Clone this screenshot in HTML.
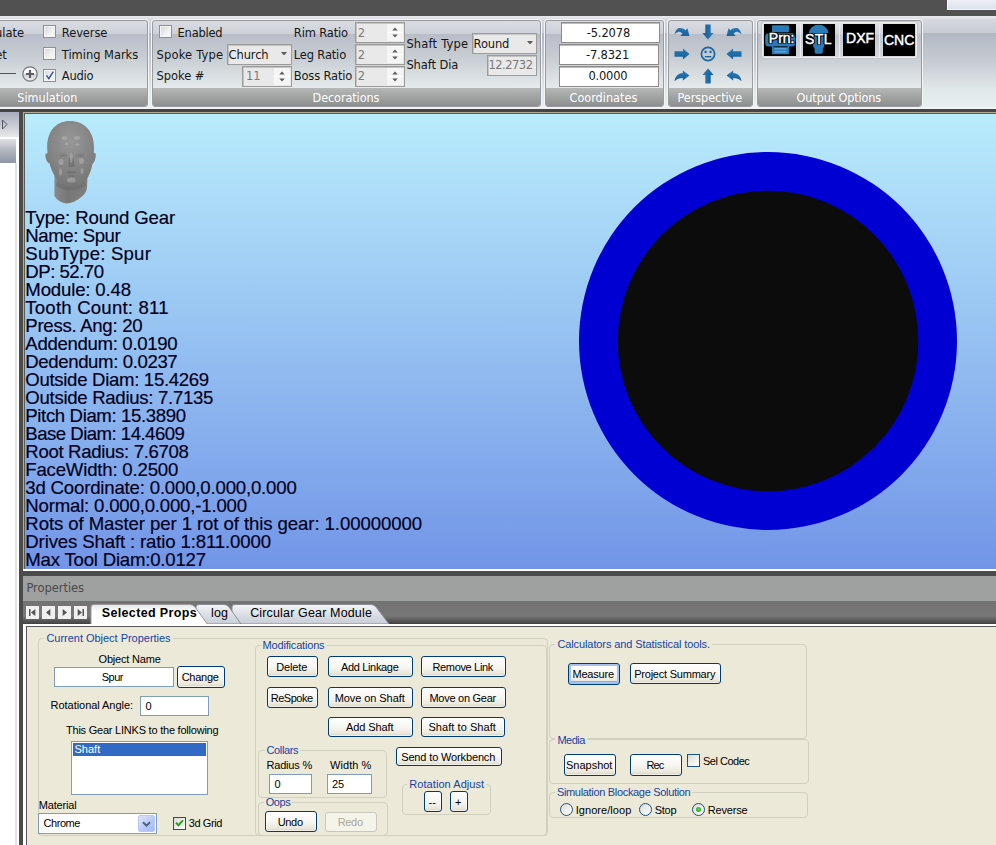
<!DOCTYPE html>
<html lang="en"><head><meta charset="utf-8"><title>Gear Designer</title>
<style>
html,body{margin:0;padding:0}
body{width:996px;height:845px;position:relative;overflow:hidden;background:#ece9d8;font-family:"Liberation Sans",sans-serif}
.a{position:absolute;box-sizing:border-box}
.t{position:absolute;white-space:pre;line-height:1}
.tah,.ari{font-family:"Liberation Sans",sans-serif}
.rib{font-family:"DejaVu Sans","Liberation Sans",sans-serif}
.ribc{font-family:"DejaVu Sans Condensed","DejaVu Sans",sans-serif}
#topbar{background:#515151}
#ribbon{background:linear-gradient(#e6e8ec 0,#e2e4e9 2px,#d6d9e0 3px,#c7cbd4 17px,#b2b8c3 17px,#c6cbd2 45px,#dfe6e8 72px,#e7f0f1 91px)}
.panel{border:1px solid #999b9e;border-radius:3px;box-shadow:0 0 0 1px #f4f5f6;background:linear-gradient(#dadce2 0,#cdd0d8 13px,#b8bdc8 13px,#cbd0d6 40px,#e6ecec 68px);overflow:hidden}
.plabel{left:0;right:0;bottom:0;height:18px;background:linear-gradient(#b6b8b8,#8d8f8f)}
.cb{border:1px solid #8e8f8f;background:linear-gradient(135deg,#d3d6dc,#f4f5f6 70%);box-shadow:inset 0 0 0 1px #f6f6f6}
.rin{border:1px solid #9b9b9b;background:#e9e9e9;box-shadow:inset 1px 1px 0 #c4c4c4}
.win{border:1px solid #8c8c8c;background:#fff;box-shadow:inset 0 1px 0 #bdbdbd}
.spin{background:#f5f5f5}
#view{background:linear-gradient(#b9ecfc,#7295e7)}
.gt{-webkit-text-stroke:.18px #00001a}
.btn{border:1px solid #003c74;border-radius:3px;background:linear-gradient(#ffffff 0,#f7f6f1 50%,#ebe8dc 85%,#d4d0c4 100%);box-shadow:inset 0 0 0 1px rgba(255,255,255,.6)}
.btn.def{box-shadow:inset 0 0 0 2px #a6c2f0,inset 0 -3px 0 #89ade4}
.btn.dis{border-color:#c9c7ba;background:#f5f4ea;box-shadow:none}
.gb{border:1px solid #d0d0bf;border-radius:4px}
.ol{text-shadow:1.3px 0 0 #000,-1.3px 0 0 #000,0 1.3px 0 #000,0 -1.3px 0 #000,1px 1px 0 #000,-1px -1px 0 #000,1px -1px 0 #000,-1px 1px 0 #000}
.ws{-webkit-text-stroke:.45px #fff}
.xin{border:1px solid #7f9db9;background:#fff}
</style></head>
<body>
<div id="topbar" class="a" style="left:0px;top:0px;width:996px;height:16px;"></div>
<div class="a" style="left:947px;top:0px;width:49px;height:10px;background:linear-gradient(#eef0f6,#dde1ec);border-left:1px solid #f8f8fa;border-bottom:1px solid #f8f8fa"></div>
<div id="ribbon" class="a" style="left:0px;top:16px;width:996px;height:91px;"></div>
<div class="a" style="left:0px;top:107px;width:996px;height:2px;background:#f4f4f4"></div>
<div class="a" style="left:0px;top:109px;width:996px;height:3px;background:#454545"></div>
<div class="a panel" style="left:-5px;top:20px;width:153px;height:87px;"><div class="a plabel"></div></div>
<span class="t rib" style="left:-5.02px;top:27.50px;font-size:11.5px;color:#161616;">ulate</span>
<span class="t rib" style="left:-4.89px;top:49.70px;font-size:11.5px;color:#161616;">et</span>
<div class="a" style="left:0px;top:73px;width:16px;height:1px;background:#555"></div>
<svg class="a" style="left:20.800px;top:64.800px" width="18" height="18" viewBox="0 0 18 18"><defs><linearGradient id="pg" x1="0" y1="0" x2="0" y2="1"><stop offset="0" stop-color="#fff"/><stop offset=".48" stop-color="#f2f3f4"/><stop offset=".52" stop-color="#cfd1d4"/><stop offset="1" stop-color="#eceeef"/></linearGradient></defs><circle cx="9" cy="9" r="7.200" fill="url(#pg)" stroke="#73767b" stroke-width="1.200"/><path d="M9 5v8M5 9h8" stroke="#5a5d66" stroke-width="2.100"/></svg>
<div class="a cb" style="left:43px;top:25px;width:13px;height:13px;"></div>
<span class="t rib" style="left:61.80px;top:27.50px;font-size:11.5px;color:#161616;letter-spacing:-0.105px;">Reverse</span>
<div class="a cb" style="left:43px;top:47px;width:13px;height:13px;"></div>
<span class="t rib" style="left:61.80px;top:49.70px;font-size:11.5px;color:#161616;letter-spacing:-0.038px;">Timing Marks</span>
<div class="a cb" style="left:43px;top:69px;width:13px;height:13px;"><svg class="a" style="left:1px;top:0" width="10" height="11" viewBox="0 0 10 11"><path d="M1.500 5.400 L3.800 8.600 L8.300 1.600" fill="none" stroke="#3d5c9e" stroke-width="1.600"/></svg></div>
<span class="t rib" style="left:61.80px;top:71.30px;font-size:11.5px;color:#161616;letter-spacing:-0.258px;">Audio</span>
<span class="t ribc" style="left:17.30px;top:92.00px;font-size:12.5px;color:#fff;letter-spacing:0.019px;">Simulation</span>
<div class="a panel" style="left:152px;top:20px;width:389px;height:87px;"><div class="a plabel"></div></div>
<div class="a cb" style="left:159px;top:25px;width:13px;height:13px;"></div>
<span class="t rib" style="left:177.60px;top:27.50px;font-size:11.5px;color:#161616;letter-spacing:-0.241px;">Enabled</span>
<span class="t rib" style="left:156.60px;top:49.70px;font-size:11.5px;color:#161616;letter-spacing:0.157px;">Spoke Type</span>
<div class="a rin" style="left:227px;top:43.5px;width:64.5px;height:21px;"></div><span class="t rib" style="left:228.60px;top:49.80px;font-size:11.5px;color:#161616;letter-spacing:-0.134px;">Church</span><svg class="a" style="left:281.3px;top:51.5px" width="6" height="3.500" viewBox="0 0 6 3.500"><path d="M0 0H6L3 3.500Z" fill="#5c5c5c"/></svg>
<span class="t rib" style="left:156.60px;top:71.30px;font-size:11.5px;color:#161616;letter-spacing:-0.067px;">Spoke #</span>
<div class="a rin" style="left:242px;top:65.5px;width:49.5px;height:21px;"></div><div class="a spin" style="left:273.5px;top:67.5px;width:16px;height:17px;"><svg class="a" style="left:5px;top:3px" width="6" height="11" viewBox="0 0 6 11"><path d="M0.300 3.500L3 0.500L5.700 3.500Z M0.300 7.500L3 10.500L5.700 7.500Z" fill="#5c5c5c"/></svg><div class="a" style="left:0;top:8px;width:16px;height:1px;background:#fff"></div></div>
<span class="t rib" style="left:246.00px;top:71.30px;font-size:11.5px;color:#7a7a7a;">11</span>
<span class="t rib" style="left:293.80px;top:27.50px;font-size:11.5px;color:#161616;letter-spacing:-0.153px;">Rim Ratio</span>
<span class="t rib" style="left:293.80px;top:49.70px;font-size:11.5px;color:#161616;letter-spacing:-0.174px;">Leg Ratio</span>
<span class="t rib" style="left:293.80px;top:71.30px;font-size:11.5px;color:#161616;letter-spacing:-0.179px;">Boss Ratio</span>
<div class="a rin" style="left:355px;top:21.5px;width:49.5px;height:21px;"></div><div class="a spin" style="left:386.5px;top:23.5px;width:16px;height:17px;"><svg class="a" style="left:5px;top:3px" width="6" height="11" viewBox="0 0 6 11"><path d="M0.300 3.500L3 0.500L5.700 3.500Z M0.300 7.500L3 10.500L5.700 7.500Z" fill="#5c5c5c"/></svg><div class="a" style="left:0;top:8px;width:16px;height:1px;background:#fff"></div></div>
<span class="t rib" style="left:357.80px;top:27.50px;font-size:11.5px;color:#7a7a7a;">2</span>
<div class="a rin" style="left:355px;top:43.5px;width:49.5px;height:21px;"></div><div class="a spin" style="left:386.5px;top:45.5px;width:16px;height:17px;"><svg class="a" style="left:5px;top:3px" width="6" height="11" viewBox="0 0 6 11"><path d="M0.300 3.500L3 0.500L5.700 3.500Z M0.300 7.500L3 10.500L5.700 7.500Z" fill="#5c5c5c"/></svg><div class="a" style="left:0;top:8px;width:16px;height:1px;background:#fff"></div></div>
<span class="t rib" style="left:357.80px;top:49.70px;font-size:11.5px;color:#7a7a7a;">2</span>
<div class="a rin" style="left:355px;top:65.5px;width:49.5px;height:21px;"></div><div class="a spin" style="left:386.5px;top:67.5px;width:16px;height:17px;"><svg class="a" style="left:5px;top:3px" width="6" height="11" viewBox="0 0 6 11"><path d="M0.300 3.500L3 0.500L5.700 3.500Z M0.300 7.500L3 10.500L5.700 7.500Z" fill="#5c5c5c"/></svg><div class="a" style="left:0;top:8px;width:16px;height:1px;background:#fff"></div></div>
<span class="t rib" style="left:357.80px;top:71.30px;font-size:11.5px;color:#7a7a7a;">2</span>
<span class="t rib" style="left:406.40px;top:38.70px;font-size:11.5px;color:#161616;letter-spacing:0.184px;">Shaft Type</span>
<div class="a rin" style="left:472px;top:32.5px;width:65px;height:21px;"></div><span class="t rib" style="left:473.60px;top:38.80px;font-size:11.5px;color:#161616;letter-spacing:-0.158px;">Round</span><svg class="a" style="left:526.8px;top:40.5px" width="6" height="3.500" viewBox="0 0 6 3.500"><path d="M0 0H6L3 3.500Z" fill="#5c5c5c"/></svg>
<span class="t rib" style="left:406.40px;top:60.40px;font-size:11.5px;color:#161616;letter-spacing:-0.106px;">Shaft Dia</span>
<div class="a rin" style="left:487px;top:54.5px;width:50px;height:21px;"></div>
<span class="t rib" style="left:488.40px;top:60.40px;font-size:11.5px;color:#7a7a7a;letter-spacing:-0.495px;">12.2732</span>
<span class="t ribc" style="left:312.60px;top:92.00px;font-size:12.5px;color:#fff;letter-spacing:-0.078px;">Decorations</span>
<div class="a panel" style="left:545px;top:20px;width:119px;height:87px;"><div class="a plabel"></div></div>
<div class="a win" style="left:560.5px;top:21.5px;width:99px;height:21px;"></div>
<div class="a win" style="left:559px;top:43.5px;width:100px;height:21px;"></div>
<div class="a win" style="left:559px;top:65.5px;width:100px;height:21px;"></div>
<span class="t rib" style="left:586.70px;top:27.50px;font-size:11.5px;color:#161616;letter-spacing:-0.142px;">-5.2078</span>
<span class="t rib" style="left:586.00px;top:49.70px;font-size:11.5px;color:#161616;letter-spacing:-0.199px;">-7.8321</span>
<span class="t rib" style="left:588.50px;top:71.30px;font-size:11.5px;color:#161616;letter-spacing:-0.225px;">0.0000</span>
<span class="t ribc" style="left:569.50px;top:92.00px;font-size:12.5px;color:#fff;letter-spacing:0.027px;">Coordinates</span>
<div class="a panel" style="left:668px;top:20px;width:85px;height:87px;"><div class="a plabel"></div></div>
<svg class="a" width="0" height="0"><defs><linearGradient id="bl" gradientUnits="userSpaceOnUse" x1="0" y1="-7" x2="0" y2="7"><stop offset="0" stop-color="#2c7dbb"/><stop offset="1" stop-color="#125a92"/></linearGradient></defs></svg>
<svg class="a" style="left:672.6px;top:22.6px" width="18" height="18" viewBox="-9 -9 18 18"><path d="M-7.450 2.070C-6.500 -1.500 -4.800 -3.700 -2.600 -3.900C-0.500 -4.100 2 -3.200 3.600 -1.800L5.400 -3.700L7.450 4.100L-1.650 4L0.470 1.700C-1 0.300 -2.500 -0.300 -3.600 -0.100C-5 0.200 -6.300 1 -7.450 2.070Z" fill="url(#bl)" transform=""/></svg>
<svg class="a" style="left:698.5px;top:22.6px" width="18" height="18" viewBox="-9 -9 18 18"><path d="M-7.500 -2.700H0.900V-5.600L7.500 0L0.900 5.600V2.700H-7.500Z" fill="url(#bl)" transform="rotate(90)"/></svg>
<svg class="a" style="left:724.6px;top:22.6px" width="18" height="18" viewBox="-9 -9 18 18"><path d="M-7.450 2.070C-6.500 -1.500 -4.800 -3.700 -2.600 -3.900C-0.500 -4.100 2 -3.200 3.600 -1.800L5.400 -3.700L7.450 4.100L-1.650 4L0.470 1.700C-1 0.300 -2.500 -0.300 -3.600 -0.100C-5 0.200 -6.300 1 -7.450 2.070Z" fill="url(#bl)" transform="scale(-1,1)"/></svg>
<svg class="a" style="left:672.6px;top:44.5px" width="18" height="18" viewBox="-9 -9 18 18"><path d="M-7.500 -2.700H0.900V-5.600L7.500 0L0.900 5.600V2.700H-7.500Z" fill="url(#bl)" transform=""/></svg>
<svg class="a" style="left:698.5px;top:44.5px" width="18" height="18" viewBox="-9 -9 18 18"><circle r="6.600" fill="none" stroke="#1a66a2" stroke-width="1.700"/><circle cx="-2.400" cy="-2.100" r="1.200" fill="#1a66a2"/><circle cx="2.500" cy="-2.100" r="1.200" fill="#1a66a2"/><path d="M-3.200 2.700H3.300" stroke="#1a66a2" stroke-width="1.400"/></svg>
<svg class="a" style="left:724.6px;top:44.5px" width="18" height="18" viewBox="-9 -9 18 18"><path d="M-7.500 -2.700H0.900V-5.600L7.500 0L0.900 5.600V2.700H-7.500Z" fill="url(#bl)" transform="scale(-1,1)"/></svg>
<svg class="a" style="left:672.6px;top:66.9px" width="18" height="18" viewBox="-9 -9 18 18"><path d="M-7.450 5.200C-7 0.500 -4 -3 0.830 -3.100V-5.500L7.450 -0.600L0.830 4.400V1.900C-2.500 1.900 -5.200 3 -7.450 5.200Z" fill="url(#bl)" transform=""/></svg>
<svg class="a" style="left:698.5px;top:66.9px" width="18" height="18" viewBox="-9 -9 18 18"><path d="M-7.500 -2.700H0.900V-5.600L7.500 0L0.900 5.600V2.700H-7.500Z" fill="url(#bl)" transform="rotate(-90)"/></svg>
<svg class="a" style="left:724.6px;top:66.9px" width="18" height="18" viewBox="-9 -9 18 18"><path d="M-7.450 5.200C-7 0.500 -4 -3 0.830 -3.100V-5.500L7.450 -0.600L0.830 4.400V1.900C-2.500 1.900 -5.200 3 -7.450 5.200Z" fill="url(#bl)" transform="scale(-1,1)"/></svg>
<span class="t ribc" style="left:677.60px;top:91.50px;font-size:12.5px;color:#fff;letter-spacing:-0.063px;">Perspective</span>
<div class="a panel" style="left:757px;top:20px;width:165px;height:87px;"><div class="a plabel"></div></div>
<div class="a" style="left:760.5px;top:21px;width:157.5px;height:37.5px;border:1px solid #c3c5c9;border-radius:3px;background:linear-gradient(#e4e6ea,#d0d3da 12px,#c3c7d0 13px,#d4d8dc);box-shadow:inset 0 0 0 1px #eceef0"></div>
<div class="a" style="left:799.5px;top:22px;width:1px;height:35.5px;background:#e8eaec"></div>
<div class="a" style="left:839px;top:22px;width:1px;height:35.5px;background:#e8eaec"></div>
<div class="a" style="left:879px;top:22px;width:1px;height:35.5px;background:#e8eaec"></div>
<div class="a" style="left:764px;top:24px;width:32px;height:32px;background:#000"><svg class="a" style="left:0;top:0" width="32" height="32" viewBox="0 0 32 32"><g fill="#2a7ab8"><rect x="8" y="1.2" width="17" height="7" rx="1"/><rect x="1.2" y="9.300" width="30" height="13.200" rx="3.500"/><rect x="8" y="20" width="17" height="10.200" rx="1"/></g><rect x="9.500" y="22" width="14" height="1.300" fill="#0d2c44"/><g fill="#5e9fd2"><rect x="10.500" y="24" width="12" height="1.600"/><rect x="10.500" y="26.800" width="12" height="1.800"/></g></svg></div>
<span class="t ari ol ws" style="left:768.80px;top:30.50px;font-size:14px;color:#fff;">Prn:</span>
<div class="a" style="left:803px;top:24px;width:32px;height:32px;background:#000"><svg class="a" style="left:0;top:0" width="32" height="32" viewBox="0 0 32 32"><g fill="#2a7ab8"><path d="M6 9 A9.700 8.200 0 0 1 25.400 9 Z"/><path d="M10 9H21.400V21Q21.400 23 19.800 24.500V28Q19.800 29.800 18 29.800H13.500Q11.600 29.800 11.600 28V24.500Q10 23 10 21Z"/></g></svg></div>
<span class="t ari ol ws" style="left:805.00px;top:31.70px;font-size:14px;color:#fff;letter-spacing:0.404px;">STL</span>
<div class="a" style="left:843px;top:24px;width:32px;height:32px;background:#000"></div>
<span class="t ari ws" style="left:846.00px;top:30.70px;font-size:14px;color:#fff;letter-spacing:0.033px;">DXF</span>
<div class="a" style="left:883px;top:24px;width:32px;height:32px;background:#000"></div>
<span class="t ari ws" style="left:884.00px;top:32.50px;font-size:14px;color:#fff;letter-spacing:-0.015px;">CNC</span>
<span class="t ribc" style="left:796.60px;top:91.70px;font-size:12.5px;color:#fff;letter-spacing:-0.117px;">Output Options</span>
<div class="a" style="left:0px;top:112px;width:19px;height:733px;background:#fff"></div>
<div class="a" style="left:0px;top:112px;width:19px;height:25px;background:linear-gradient(#a8aebb,#c6c9d0 50%,#e8e9ea)"></div>
<svg class="a" style="left:1px;top:119px" width="8" height="11" viewBox="0 0 8 11"><path d="M1.5 1L6 5.5L1.5 10Z" fill="none" stroke="#50545e" stroke-width="1"/></svg>
<div class="a" style="left:0px;top:139px;width:16px;height:24px;background:linear-gradient(#dfe0e3,#b4b8c1 45%,#8f95a3)"></div>
<div class="a" style="left:15px;top:163px;width:1.5px;height:682px;background:#e2e2e2"></div>
<div class="a" style="left:19px;top:112px;width:4px;height:733px;background:#4b4b4b"></div>
<div class="a" style="left:23px;top:112px;width:973px;height:459px;background:#fff"></div>
<div class="a" style="left:23px;top:112px;width:973px;height:457px;background:#b3aa98"></div>
<div class="a" style="left:24px;top:113px;width:972px;height:456px;background:#5c5a50"></div>
<div id="view" class="a" style="left:25px;top:114px;width:971px;height:455px">
<svg class="a" style="left:553px;top:37px" width="380" height="380" viewBox="-190 -190 380 380"><circle r="189" fill="#0000d2"/><circle r="150.3" fill="#0c0c0c"/></svg>
<svg class="a" style="left:18px;top:5px" width="56" height="86" viewBox="43 119 56 86">
<defs><radialGradient id="hg" cx=".5" cy=".32" r=".75"><stop offset="0" stop-color="#979797"/><stop offset=".5" stop-color="#868686"/><stop offset="1" stop-color="#737373"/></radialGradient>
<linearGradient id="ng" x1="0" y1="0" x2="1" y2="0"><stop offset="0" stop-color="#888"/><stop offset=".4" stop-color="#777"/><stop offset="1" stop-color="#808080"/></linearGradient>
<filter id="hb" x="-20%" y="-20%" width="140%" height="140%"><feGaussianBlur stdDeviation=".7"/></filter></defs>
<path d="M54.500 176 L54.500 196 Q58 202 66 203.500 Q74 203 80 198 Q86 194 87 188 L87.500 176Z" fill="url(#ng)"/>
<path d="M57 181 Q71 190 85.500 181 L86 186 Q71 195 56 186Z" fill="#6a6a6a" opacity=".5" filter="url(#hb)"/>
<path d="M70 121 C84 121 94 131 94 147 C94 150 94 152 93.800 153 C95.500 152.500 96.300 154 95.600 157 C95 160.500 94 163 92.600 163.500 C91.500 170 89 176 86 180 C82 185 77 186.500 71 186.500 C65 186.500 60 184 56.500 179 C53 174 50.500 168 49.600 163.500 C47.600 163 46 160 45.400 156.500 C45 153.500 46.200 152.800 47.600 153.400 C47.200 151 47.200 149 47.200 147 C47.200 131 56 121 70 121Z" fill="url(#hg)"/>
<g fill="#6c6c6c" opacity=".7" filter="url(#hb)"><ellipse cx="63" cy="155.500" rx="3.800" ry="2.200"/><ellipse cx="80" cy="155.500" rx="3.800" ry="2.200"/><path d="M69 158 L73.500 158 L74.800 166 Q71.500 168.500 68 166Z"/><ellipse cx="71.300" cy="172.300" rx="4.800" ry="1.200"/><ellipse cx="71.300" cy="176" rx="3" ry="1"/></g>
<g fill="#b2b2b2" opacity=".55" filter="url(#hb)"><ellipse cx="64.500" cy="138" rx="3" ry="2"/><ellipse cx="77" cy="138" rx="3" ry="2"/><ellipse cx="66.500" cy="144" rx="2" ry="1.300"/><ellipse cx="77.500" cy="144.500" rx="2" ry="1.300"/><ellipse cx="61" cy="162" rx="2.600" ry="3"/><ellipse cx="81.500" cy="161" rx="2.600" ry="3"/><ellipse cx="71.300" cy="180" rx="4.500" ry="2.600"/><ellipse cx="60.500" cy="172" rx="1.500" ry="3.500"/><ellipse cx="82" cy="171" rx="1.500" ry="3"/><ellipse cx="71.300" cy="158" rx="1.300" ry="5"/></g>
<g fill="none" stroke="#a6a6a6" stroke-width=".7" opacity=".8"><ellipse cx="63" cy="155.600" rx="2.800" ry="1.600"/><ellipse cx="80" cy="155.600" rx="2.800" ry="1.600"/></g>
</svg>
</div>
<span class="t ari gt" style="left:25.30px;top:209.40px;font-size:18.6px;color:#00001a;letter-spacing:-0.134px;">Type: Round Gear</span>
<span class="t ari gt" style="left:25.30px;top:227.40px;font-size:18.6px;color:#00001a;letter-spacing:-0.422px;">Name: Spur</span>
<span class="t ari gt" style="left:25.30px;top:245.40px;font-size:18.6px;color:#00001a;letter-spacing:0.214px;">SubType: Spur</span>
<span class="t ari gt" style="left:25.30px;top:263.40px;font-size:18.6px;color:#00001a;letter-spacing:-0.500px;">DP: 52.70</span>
<span class="t ari gt" style="left:25.30px;top:281.40px;font-size:18.6px;color:#00001a;letter-spacing:-0.160px;">Module: 0.48</span>
<span class="t ari gt" style="left:25.30px;top:299.40px;font-size:18.6px;color:#00001a;letter-spacing:0.203px;">Tooth Count: 811</span>
<span class="t ari gt" style="left:25.30px;top:317.40px;font-size:18.6px;color:#00001a;letter-spacing:-0.281px;">Press. Ang: 20</span>
<span class="t ari gt" style="left:25.30px;top:335.40px;font-size:18.6px;color:#00001a;letter-spacing:-0.321px;">Addendum: 0.0190</span>
<span class="t ari gt" style="left:25.30px;top:353.40px;font-size:18.6px;color:#00001a;letter-spacing:-0.386px;">Dedendum: 0.0237</span>
<span class="t ari gt" style="left:25.30px;top:371.40px;font-size:18.6px;color:#00001a;letter-spacing:-0.314px;">Outside Diam: 15.4269</span>
<span class="t ari gt" style="left:25.30px;top:389.40px;font-size:18.6px;color:#00001a;letter-spacing:-0.297px;">Outside Radius: 7.7135</span>
<span class="t ari gt" style="left:25.30px;top:407.40px;font-size:18.6px;color:#00001a;letter-spacing:-0.370px;">Pitch Diam: 15.3890</span>
<span class="t ari gt" style="left:25.30px;top:425.40px;font-size:18.6px;color:#00001a;letter-spacing:-0.521px;">Base Diam: 14.4609</span>
<span class="t ari gt" style="left:25.30px;top:443.40px;font-size:18.6px;color:#00001a;letter-spacing:-0.328px;">Root Radius: 7.6708</span>
<span class="t ari gt" style="left:25.30px;top:461.40px;font-size:18.6px;color:#00001a;letter-spacing:-0.193px;">FaceWidth: 0.2500</span>
<span class="t ari gt" style="left:25.30px;top:479.40px;font-size:18.6px;color:#00001a;letter-spacing:-0.181px;">3d Coordinate: 0.000,0.000,0.000</span>
<span class="t ari gt" style="left:25.30px;top:497.40px;font-size:18.6px;color:#00001a;letter-spacing:-0.184px;">Normal: 0.000,0.000,-1.000</span>
<span class="t ari gt" style="left:25.30px;top:515.40px;font-size:18.6px;color:#00001a;letter-spacing:-0.090px;">Rots of Master per 1 rot of this gear: 1.00000000</span>
<span class="t ari gt" style="left:25.30px;top:533.40px;font-size:18.6px;color:#00001a;letter-spacing:-0.135px;">Drives Shaft : ratio 1:811.0000</span>
<span class="t ari gt" style="left:25.30px;top:551.40px;font-size:18.6px;color:#00001a;letter-spacing:-0.204px;">Max Tool Diam:0.0127</span>
<div class="a" style="left:23px;top:571px;width:973px;height:4.5px;background:#4b4b4d"></div>
<div class="a" style="left:23px;top:575.5px;width:973px;height:0.8px;background:#c4c4c4"></div>
<div class="a" style="left:23px;top:576px;width:973px;height:25px;background:#9fa1a0"></div>
<span class="t rib" style="left:26.40px;top:582.60px;font-size:11.5px;color:#4a4a4a;letter-spacing:-0.052px;">Properties</span>
<div class="a" style="left:23px;top:601px;width:973px;height:23px;background:linear-gradient(#727272 0,#787878 65%,#404040 100%)"></div>
<div class="a" style="left:26px;top:606px;width:13px;height:13px;background:#f0f0f0"><svg class="a" style="left:0;top:0" width="13" height="13" viewBox="0 0 13 13" fill="#555"><rect x="3" y="3" width="1.500" height="7"/><path d="M9.300 3L5 6.500L9.300 10Z"/></svg></div>
<div class="a" style="left:42px;top:606px;width:13px;height:13px;background:#f0f0f0"><svg class="a" style="left:0;top:0" width="13" height="13" viewBox="0 0 13 13" fill="#555"><path d="M8.300 3L4 6.500L8.300 10Z"/></svg></div>
<div class="a" style="left:58px;top:606px;width:13px;height:13px;background:#f0f0f0"><svg class="a" style="left:0;top:0" width="13" height="13" viewBox="0 0 13 13" fill="#555"><path d="M4.700 3L9 6.500L4.700 10Z"/></svg></div>
<div class="a" style="left:74px;top:606px;width:13px;height:13px;background:#f0f0f0"><svg class="a" style="left:0;top:0" width="13" height="13" viewBox="0 0 13 13" fill="#555"><rect x="8.500" y="3" width="1.500" height="7"/><path d="M3.700 3L8 6.500L3.700 10Z"/></svg></div>
<svg class="a" style="left:88px;top:601px" width="320" height="24" viewBox="88 601 320 24"><defs><linearGradient id="tg" x1="0" y1="0" x2="0" y2="1"><stop offset="0" stop-color="#f4f5f8"/><stop offset=".5" stop-color="#dcdfe6"/><stop offset="1" stop-color="#c9cdd6"/></linearGradient><linearGradient id="tg2" x1="0" y1="0" x2="0" y2="1"><stop offset="0" stop-color="#e4e6ea"/><stop offset=".35" stop-color="#fff"/><stop offset="1" stop-color="#fff"/></linearGradient></defs><path d="M232 624 L232 607 Q232 604.500 235 604.500 L371 604.500 Q374 604.500 376 607 L389 624Z" fill="url(#tg)" stroke="#8b8d92" stroke-width="1"/><path d="M196 624 L196 607 Q196 604.500 199 604.500 L224 604.500 Q227 604.500 229 607 L241 624Z" fill="url(#tg)" stroke="#8b8d92" stroke-width="1"/><path d="M91 625 L91 607 Q91 604.500 94 604.500 L190 604.500 Q193 604.500 195 607 L208 625Z" fill="url(#tg2)" stroke="#9a9a9a" stroke-width="1"/></svg>
<span class="t ari" style="left:101.70px;top:606.50px;font-size:12.5px;color:#000;letter-spacing:0.355px;font-weight:bold;">Selected Props</span>
<span class="t ari" style="left:211.00px;top:607.00px;font-size:12.5px;color:#000;letter-spacing:0.104px;">log</span>
<span class="t ari" style="left:250.20px;top:607.00px;font-size:12.5px;color:#000;letter-spacing:0.150px;">Circular Gear Module</span>
<div class="a" style="left:23px;top:624px;width:973px;height:2px;background:#fff"></div>
<div class="a" style="left:23px;top:624px;width:2.5px;height:221px;background:#fff"></div>
<div class="a" style="left:25.5px;top:626px;width:970.5px;height:1px;background:#5a5a5a"></div>
<div class="a" style="left:25.5px;top:626px;width:1px;height:219px;background:#5a5a5a"></div>
<div class="a gb" style="left:38px;top:638px;width:510px;height:197.5px;"></div><div class="a" style="left:44.4px;top:637px;width:128.2px;height:3px;background:#ece9d8"></div><span class="t tah" style="left:46.40px;top:632.50px;font-size:11px;color:#1544a6;letter-spacing:-0.021px;">Current Object Properties</span>
<div class="a gb" style="left:254.5px;top:645px;width:292.5px;height:190.5px;"></div><div class="a" style="left:260.6px;top:644px;width:65.8px;height:3px;background:#ece9d8"></div><span class="t tah" style="left:262.60px;top:640.00px;font-size:11px;color:#1544a6;letter-spacing:-0.185px;">Modifications</span>
<div class="a gb" style="left:258px;top:750px;width:129px;height:47.5px;"></div><div class="a" style="left:264.5px;top:749px;width:35.7px;height:3px;background:#ece9d8"></div><span class="t tah" style="left:266.50px;top:745.00px;font-size:11px;color:#1544a6;letter-spacing:-0.362px;">Collars</span>
<div class="a gb" style="left:257.5px;top:801.5px;width:130.5px;height:34px;"></div><div class="a" style="left:263.7px;top:800.5px;width:28.6px;height:3px;background:#ece9d8"></div><span class="t tah" style="left:265.70px;top:796.70px;font-size:11px;color:#1544a6;letter-spacing:-0.424px;">Oops</span>
<div class="a gb" style="left:401.5px;top:784px;width:89.5px;height:31px;"></div><div class="a" style="left:407.3px;top:783px;width:78.9px;height:3px;background:#ece9d8"></div><span class="t tah" style="left:409.30px;top:779.00px;font-size:11px;color:#1544a6;letter-spacing:0.060px;">Rotation Adjust</span>
<div class="a gb" style="left:549px;top:644px;width:258px;height:94.5px;"></div><div class="a" style="left:555.4px;top:643px;width:156.6px;height:3px;background:#ece9d8"></div><span class="t tah" style="left:557.40px;top:638.70px;font-size:11px;color:#1544a6;letter-spacing:-0.098px;">Calculators and Statistical tools.</span>
<div class="a gb" style="left:549px;top:739px;width:259.5px;height:45px;"></div><div class="a" style="left:555.4px;top:738px;width:31.6px;height:3px;background:#ece9d8"></div><span class="t tah" style="left:557.40px;top:734.50px;font-size:11px;color:#1544a6;letter-spacing:-0.474px;">Media</span>
<div class="a gb" style="left:549px;top:792px;width:258.5px;height:26px;"></div><div class="a" style="left:554.9px;top:791px;width:137.5px;height:3px;background:#ece9d8"></div><span class="t tah" style="left:556.90px;top:787.30px;font-size:11px;color:#1544a6;letter-spacing:-0.321px;">Simulation Blockage Solution</span>
<span class="t tah" style="left:98.60px;top:653.70px;font-size:11px;color:#000;letter-spacing:-0.200px;">Object Name</span>
<div class="a xin" style="left:54px;top:667px;width:119.5px;height:20px;"></div>
<span class="t tah" style="left:101.80px;top:671.80px;font-size:11px;color:#000;letter-spacing:-0.562px;">Spur</span>
<div class="a btn" style="left:177px;top:666px;width:48px;height:21.5px;"></div><span class="t tah" style="left:181.70px;top:672.45px;font-size:11px;color:#000;letter-spacing:-0.258px;">Change</span>
<span class="t tah" style="left:50.60px;top:700.00px;font-size:11px;color:#000;letter-spacing:-0.045px;">Rotational Angle:</span>
<div class="a xin" style="left:140px;top:696px;width:69px;height:20px;"></div>
<span class="t tah" style="left:145.50px;top:701.00px;font-size:11px;color:#000;">0</span>
<span class="t tah" style="left:66.00px;top:725.30px;font-size:11px;color:#000;letter-spacing:-0.224px;">This Gear LINKS to the following</span>
<div class="a xin" style="left:71px;top:741px;width:137px;height:54px;"><div class="a" style="left:1px;top:1px;width:133px;height:13px;background:#316ac5"></div></div>
<span class="t tah" style="left:74.50px;top:744.00px;font-size:11px;color:#fff;">Shaft</span>
<span class="t tah" style="left:38.80px;top:799.60px;font-size:11px;color:#000;letter-spacing:-0.178px;">Material</span>
<div class="a xin" style="left:38px;top:813px;width:119px;height:20.5px;"></div>
<span class="t tah" style="left:43.50px;top:818.00px;font-size:11px;color:#000;letter-spacing:-0.438px;">Chrome</span>
<div class="a" style="left:138px;top:814.5px;width:17px;height:17.5px;border-radius:2px;background:linear-gradient(135deg,#dbe6fd,#b6c9f8 60%,#a4baf0);border:1px solid #b9c9f3"><svg class="a" style="left:3px;top:5px" width="9" height="7" viewBox="0 0 9 7"><path d="M1 1.200L4.500 4.700L8 1.200" fill="none" stroke="#4d6185" stroke-width="2"/></svg></div>
<div class="a" style="left:173px;top:816.5px;width:13px;height:13px;border:1px solid #1c5180;background:linear-gradient(135deg,#dcdcd5,#fff)"><svg class="a" style="left:1px;top:1px" width="9" height="9" viewBox="0 0 9 9"><path d="M1 3.600L3.400 6.200L8 1.400" fill="none" stroke="#21a121" stroke-width="2"/></svg></div>
<span class="t tah" style="left:188.70px;top:817.70px;font-size:11px;color:#000;letter-spacing:-0.397px;">3d Grid</span>
<div class="a btn" style="left:267px;top:656px;width:51px;height:21px;"></div><span class="t tah" style="left:276.20px;top:662.20px;font-size:11px;color:#000;letter-spacing:-0.133px;">Delete</span>
<div class="a btn" style="left:328px;top:656px;width:85px;height:21px;"></div><span class="t tah" style="left:340.95px;top:662.20px;font-size:11px;color:#000;letter-spacing:-0.334px;">Add Linkage</span>
<div class="a btn" style="left:421px;top:656px;width:85px;height:21px;"></div><span class="t tah" style="left:432.45px;top:662.20px;font-size:11px;color:#000;letter-spacing:-0.337px;">Remove Link</span>
<div class="a btn" style="left:267px;top:687px;width:51px;height:21px;"></div><span class="t tah" style="left:270.70px;top:693.20px;font-size:11px;color:#000;letter-spacing:-0.467px;">ReSpoke</span>
<div class="a btn" style="left:328px;top:687px;width:85px;height:21px;"></div><span class="t tah" style="left:334.70px;top:693.20px;font-size:11px;color:#000;letter-spacing:-0.072px;">Move on Shaft</span>
<div class="a btn" style="left:421px;top:687px;width:85px;height:21px;"></div><span class="t tah" style="left:429.45px;top:693.20px;font-size:11px;color:#000;letter-spacing:-0.267px;">Move on Gear</span>
<div class="a btn" style="left:328px;top:716.5px;width:85px;height:20.5px;"></div><span class="t tah" style="left:345.95px;top:722.45px;font-size:11px;color:#000;letter-spacing:-0.092px;">Add Shaft</span>
<div class="a btn" style="left:421px;top:716.5px;width:84px;height:20.5px;"></div><span class="t tah" style="left:428.45px;top:722.45px;font-size:11px;color:#000;letter-spacing:0.060px;">Shaft to Shaft</span>
<div class="a btn" style="left:396px;top:746.5px;width:106px;height:19px;"></div><span class="t tah" style="left:401.20px;top:751.70px;font-size:11px;color:#000;letter-spacing:-0.142px;">Send to Workbench</span>
<span class="t tah" style="left:266.50px;top:759.70px;font-size:11px;color:#000;letter-spacing:-0.197px;">Radius %</span>
<span class="t tah" style="left:330.00px;top:759.70px;font-size:11px;color:#000;letter-spacing:0.062px;">Width %</span>
<div class="a xin" style="left:269px;top:774px;width:42.5px;height:20px;"></div>
<span class="t tah" style="left:274.50px;top:779.00px;font-size:11px;color:#000;">0</span>
<div class="a xin" style="left:326.5px;top:774px;width:45px;height:20px;"></div>
<span class="t tah" style="left:332.00px;top:779.00px;font-size:11px;color:#000;">25</span>
<div class="a btn hot" style="left:265px;top:811px;width:52px;height:21px;"></div><span class="t tah" style="left:277.70px;top:817.20px;font-size:11px;color:#000;letter-spacing:-0.324px;">Undo</span>
<div class="a btn dis" style="left:325px;top:811.5px;width:52px;height:20px;"></div><span class="t tah" style="left:337.70px;top:817.20px;font-size:11px;color:#aca899;letter-spacing:-0.324px;">Redo</span>
<div class="a btn" style="left:424px;top:791px;width:18px;height:21px;"></div><span class="t tah" style="left:428.54px;top:797.20px;font-size:11px;color:#000;">--</span>
<div class="a btn" style="left:450px;top:791px;width:18px;height:21px;"></div><span class="t tah" style="left:454.98px;top:797.20px;font-size:11px;color:#000;">+</span>
<div class="a btn def" style="left:568px;top:663px;width:52px;height:21.5px;"></div><span class="t tah" style="left:572.45px;top:669.45px;font-size:11px;color:#000;letter-spacing:-0.185px;">Measure</span>
<div class="a btn" style="left:630px;top:663px;width:91px;height:21px;"></div><span class="t tah" style="left:634.20px;top:669.20px;font-size:11px;color:#000;letter-spacing:-0.224px;">Project Summary</span>
<div class="a btn" style="left:564px;top:754px;width:52px;height:21.5px;"></div><span class="t tah" style="left:565.95px;top:760.45px;font-size:11px;color:#000;">Snapshot</span>
<div class="a btn" style="left:630px;top:754px;width:51.5px;height:21.5px;"></div><span class="t tah" style="left:646.45px;top:760.45px;font-size:11px;color:#000;letter-spacing:-0.854px;">Rec</span>
<div class="a" style="left:687px;top:754px;width:13px;height:13px;border:1px solid #1c5180;background:linear-gradient(135deg,#dcdcd5,#fff)"></div>
<span class="t tah" style="left:703.00px;top:756.10px;font-size:11px;color:#000;letter-spacing:-0.485px;">Sel Codec</span>
<div class="a" style="left:559.8px;top:803.4px;width:13px;height:13px;border-radius:50%;border:1px solid #1c5180;background:linear-gradient(135deg,#dcdcd5,#fff)"></div>
<span class="t tah" style="left:575.70px;top:804.80px;font-size:11px;color:#000;letter-spacing:0.059px;">Ignore/loop</span>
<div class="a" style="left:638.9px;top:803.4px;width:13px;height:13px;border-radius:50%;border:1px solid #1c5180;background:linear-gradient(135deg,#dcdcd5,#fff)"></div>
<span class="t tah" style="left:654.70px;top:804.80px;font-size:11px;color:#000;letter-spacing:-0.235px;">Stop</span>
<div class="a" style="left:691.7px;top:803.4px;width:13px;height:13px;border-radius:50%;border:1px solid #1c5180;background:linear-gradient(135deg,#dcdcd5,#fff)"><div class="a" style="left:3px;top:3px;width:5px;height:5px;border-radius:50%;background:radial-gradient(#55d551,#1e9a1c)"></div></div>
<span class="t tah" style="left:707.80px;top:804.80px;font-size:11px;color:#000;letter-spacing:-0.181px;">Reverse</span>
</body></html>
